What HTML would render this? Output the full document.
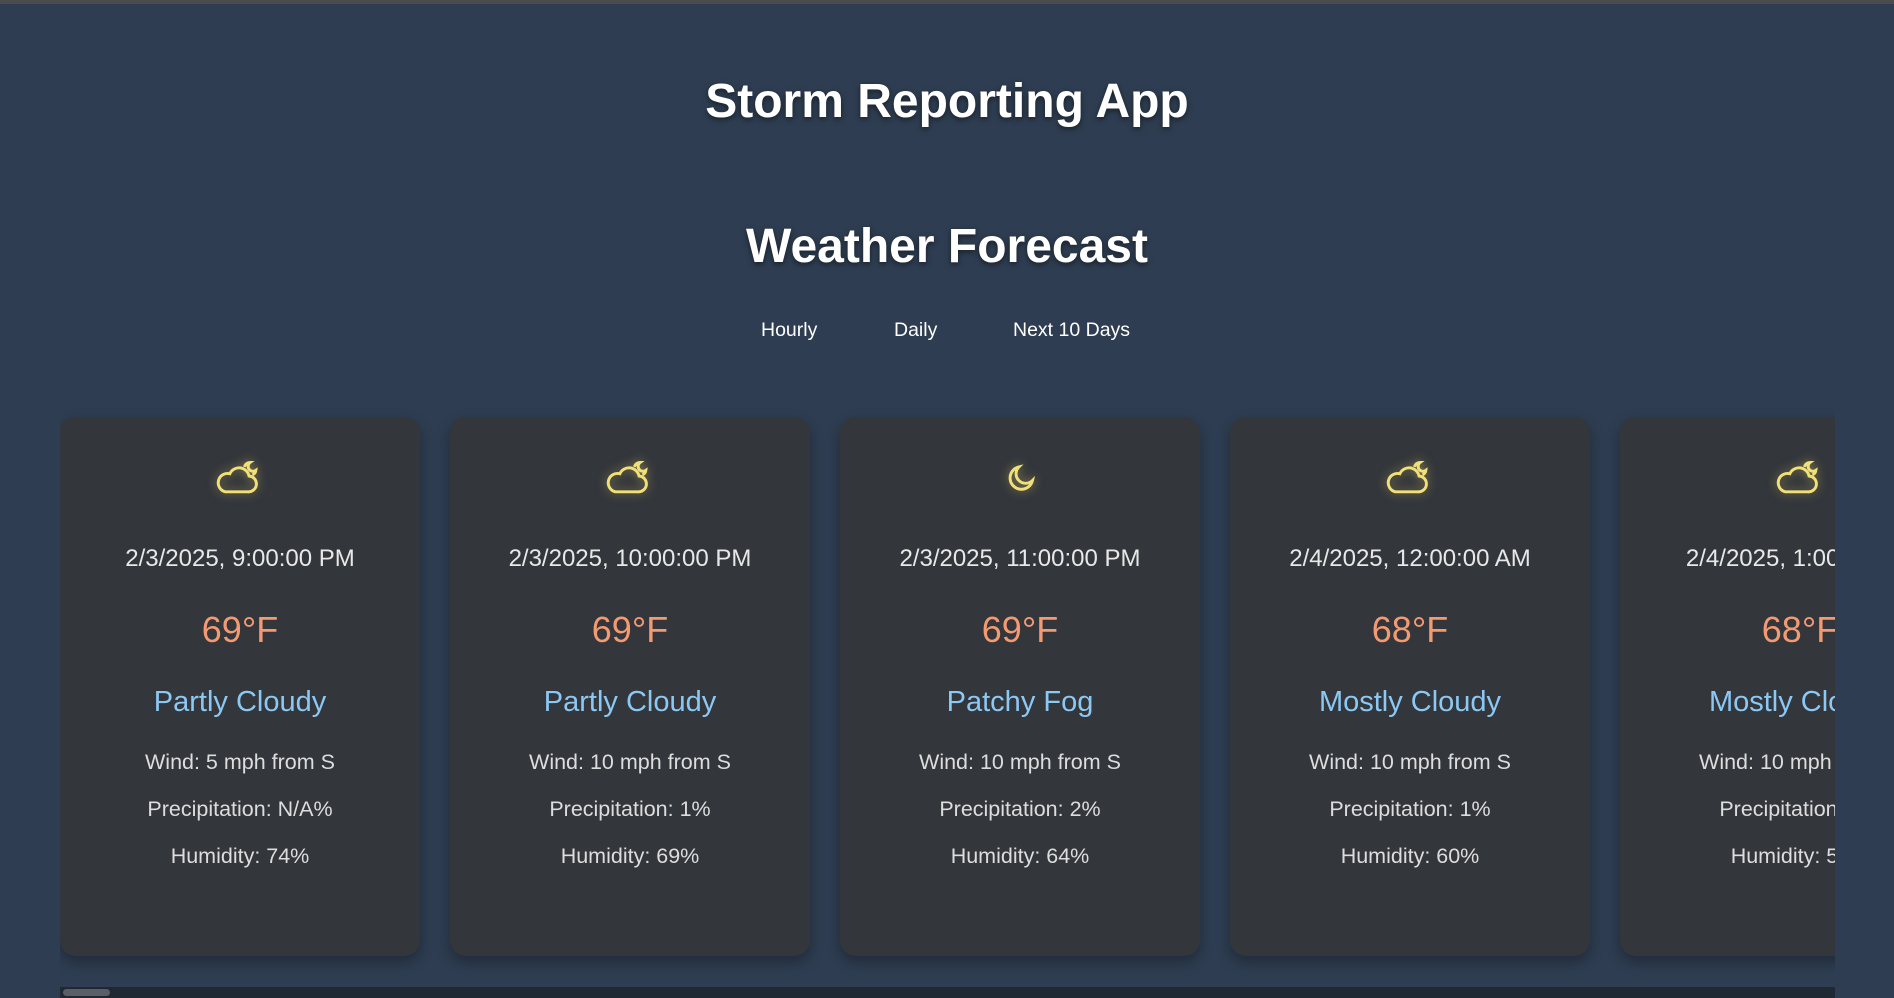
<!DOCTYPE html>
<html><head><meta charset="utf-8"><style>
html,body{margin:0;padding:0;width:1894px;height:998px;overflow:hidden;background:#2e3d51;font-family:"Liberation Sans",Arial,sans-serif;}
.topbar{position:absolute;left:0;top:0;width:1894px;height:4px;background:#4a4c50;}
h1{position:absolute;top:74px;left:0;width:1894px;text-align:center;margin:0;color:#fff;font-size:48px;font-weight:bold;text-shadow:0 2px 6px rgba(0,0,0,.5);}
h2{position:absolute;top:219px;left:0;width:1894px;text-align:center;margin:0;color:#fff;font-size:48px;font-weight:bold;text-shadow:0 2px 6px rgba(0,0,0,.5);}
.tab{position:absolute;top:319px;color:#fff;font-size:19.5px;}
.wrap{position:absolute;left:60px;top:400px;width:1775px;height:587px;overflow:hidden;}
.card{position:absolute;top:17px;width:360px;height:539px;background:#33363b;border-radius:16px;box-shadow:0 6px 14px rgba(0,0,0,.3);text-align:center;color:#ddd;}
.card div{position:absolute;left:0;width:360px;}
.icon{top:36px;height:46px;}
.d{top:128px;font-size:24px;color:#e8e8e8;}
.t{top:192px;font-size:36px;color:#f39a72;}
.c{top:269px;font-size:29px;color:#8cc8f4;}
.w{top:333px;font-size:21.5px;}
.p{top:380px;font-size:21.5px;}
.h{top:427px;font-size:21.5px;}
.track{position:absolute;left:60px;top:987px;width:1775px;height:11px;background:#1f2833;}
.thumb{position:absolute;left:63px;top:989px;width:47px;height:7px;background:#5a5f66;border-radius:4px;}
</style></head><body>
<div class="topbar"></div>
<h1>Storm Reporting App</h1>
<h2>Weather Forecast</h2>
<div class="tab" style="left:761px">Hourly</div>
<div class="tab" style="left:894px">Daily</div>
<div class="tab" style="left:1013px">Next 10 Days</div>
<div class="wrap">
<div class="card" style="left:0"><div class="icon"><svg width="52" height="46" viewBox="0 0 46 40" style="filter:drop-shadow(0 0 5px rgba(240,220,100,.5))"><path d="M10 34h20a7 7 0 0 0 1-14a9 9 0 0 0-17-2a8 8 0 0 0-4 16z" fill="none" stroke="#f1e07a" stroke-width="2.6"/><path d="M27 12a5 5 0 0 1 5-4a4 4 0 0 0 5 7a5 5 0 0 1-3 4" fill="none" stroke="#f1e07a" stroke-width="2.6"/></svg></div><div class="d">2/3/2025, 9:00:00 PM</div><div class="t">69°F</div><div class="c">Partly Cloudy</div><div class="w">Wind: 5 mph from S</div><div class="p">Precipitation: N/A%</div><div class="h">Humidity: 74%</div></div>
<div class="card" style="left:390px"><div class="icon"><svg width="52" height="46" viewBox="0 0 46 40" style="filter:drop-shadow(0 0 5px rgba(240,220,100,.5))"><path d="M10 34h20a7 7 0 0 0 1-14a9 9 0 0 0-17-2a8 8 0 0 0-4 16z" fill="none" stroke="#f1e07a" stroke-width="2.6"/><path d="M27 12a5 5 0 0 1 5-4a4 4 0 0 0 5 7a5 5 0 0 1-3 4" fill="none" stroke="#f1e07a" stroke-width="2.6"/></svg></div><div class="d">2/3/2025, 10:00:00 PM</div><div class="t">69°F</div><div class="c">Partly Cloudy</div><div class="w">Wind: 10 mph from S</div><div class="p">Precipitation: 1%</div><div class="h">Humidity: 69%</div></div>
<div class="card" style="left:780px"><div class="icon"><svg width="52" height="46" viewBox="0 0 46 40" style="filter:drop-shadow(0 0 5px rgba(240,220,100,.5))"><path d="M22 12a10 10 0 1 0 12 12a8 8 0 0 1-12-12z" fill="none" stroke="#f1e07a" stroke-width="2.6"/></svg></div><div class="d">2/3/2025, 11:00:00 PM</div><div class="t">69°F</div><div class="c">Patchy Fog</div><div class="w">Wind: 10 mph from S</div><div class="p">Precipitation: 2%</div><div class="h">Humidity: 64%</div></div>
<div class="card" style="left:1170px"><div class="icon"><svg width="52" height="46" viewBox="0 0 46 40" style="filter:drop-shadow(0 0 5px rgba(240,220,100,.5))"><path d="M10 34h20a7 7 0 0 0 1-14a9 9 0 0 0-17-2a8 8 0 0 0-4 16z" fill="none" stroke="#f1e07a" stroke-width="2.6"/><path d="M27 12a5 5 0 0 1 5-4a4 4 0 0 0 5 7a5 5 0 0 1-3 4" fill="none" stroke="#f1e07a" stroke-width="2.6"/></svg></div><div class="d">2/4/2025, 12:00:00 AM</div><div class="t">68°F</div><div class="c">Mostly Cloudy</div><div class="w">Wind: 10 mph from S</div><div class="p">Precipitation: 1%</div><div class="h">Humidity: 60%</div></div>
<div class="card" style="left:1560px"><div class="icon"><svg width="52" height="46" viewBox="0 0 46 40" style="filter:drop-shadow(0 0 5px rgba(240,220,100,.5))"><path d="M10 34h20a7 7 0 0 0 1-14a9 9 0 0 0-17-2a8 8 0 0 0-4 16z" fill="none" stroke="#f1e07a" stroke-width="2.6"/><path d="M27 12a5 5 0 0 1 5-4a4 4 0 0 0 5 7a5 5 0 0 1-3 4" fill="none" stroke="#f1e07a" stroke-width="2.6"/></svg></div><div class="d">2/4/2025, 1:00:00 AM</div><div class="t">68°F</div><div class="c">Mostly Cloudy</div><div class="w">Wind: 10 mph from S</div><div class="p">Precipitation: 1%</div><div class="h">Humidity: 59%</div></div>
</div>
<div class="track"></div><div class="thumb"></div>
</body></html>
